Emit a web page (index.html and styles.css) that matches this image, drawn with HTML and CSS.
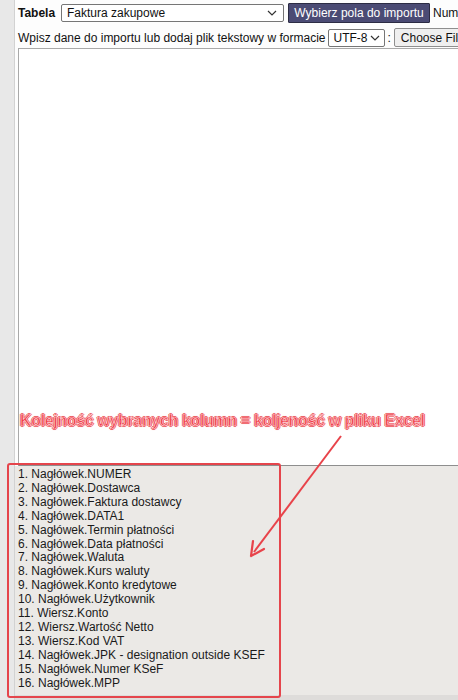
FILE: index.html
```html
<!DOCTYPE html>
<html lang="pl">
<head>
<meta charset="utf-8">
<title>Import</title>
<link rel="stylesheet" href="styles.css">
</head>
<body>
<div class="page">
  <div class="sidebar"></div>
  <div class="main">
    <div class="row row1">
      <span class="label">Tabela</span>
      <div class="select table-select"><span>Faktura zakupowe</span><svg class="chev" width="10" height="6" viewBox="0 0 10 6"><path d="M1 1 L5 5 L9 1" fill="none" stroke="#333" stroke-width="1.2"/></svg></div>
      <button class="btn-primary">Wybierz pola do importu</button>
      <span class="num">Numer</span>
    </div>
    <div class="row row2">
      <span class="hint">Wpisz dane do importu lub dodaj plik tekstowy w formacie</span>
      <div class="select enc-select"><span>UTF-8</span><svg class="chev" width="10" height="6" viewBox="0 0 10 6"><path d="M1 1 L5 5 L9 1" fill="none" stroke="#333" stroke-width="1.2"/></svg></div>
      <span class="colon">:</span>
      <button class="btn-file">Choose File</button>
    </div>
    <div class="textarea"></div>
    <div class="list">
      <div>1. Nagłówek.NUMER</div>
      <div>2. Nagłówek.Dostawca</div>
      <div>3. Nagłówek.Faktura dostawcy</div>
      <div>4. Nagłówek.DATA1</div>
      <div>5. Nagłówek.Termin płatności</div>
      <div>6. Nagłówek.Data płatności</div>
      <div>7. Nagłówek.Waluta</div>
      <div>8. Nagłówek.Kurs waluty</div>
      <div>9. Nagłówek.Konto kredytowe</div>
      <div>10. Nagłówek.Użytkownik</div>
      <div>11. Wiersz.Konto</div>
      <div>12. Wiersz.Wartość Netto</div>
      <div>13. Wiersz.Kod VAT</div>
      <div>14. Nagłówek.JPK - designation outside KSEF</div>
      <div>15. Nagłówek.Numer KSeF</div>
      <div>16. Nagłówek.MPP</div>
    </div>
  </div>
  <div class="note">Kolejność wybranych kolumn = koljeność w pliku Excel</div>
  <div class="redbox"></div>
  <svg class="arrow" width="458" height="700" viewBox="0 0 458 700">
    <line x1="341" y1="436" x2="254" y2="552" stroke="#e8434a" stroke-width="2"/>
    <path d="M251 556 L253 541 M251 556 L264 549" fill="none" stroke="#e8434a" stroke-width="2.2" stroke-linecap="round"/>
  </svg>
</div>
</body>
</html>
```
FILE: styles.css
```css
html, body {
  margin: 0;
  padding: 0;
}
body {
  font-family: "Liberation Sans", Arial, sans-serif;
  font-size: 12px;
  color: #111;
  background: #fdfdfd;
  overflow: hidden;
}
.page {
  position: relative;
  display: flex;
  width: 458px;
  height: 700px;
  overflow: hidden;
}
.sidebar {
  flex: 0 0 14px;
  background: #e8e8e8;
  border-right: 1px solid #d2d2d2;
}
.main {
  flex: 1;
  min-width: 0;
  padding-left: 3px;
  display: flex;
  flex-direction: column;
  overflow: hidden;
}
.row {
  display: flex;
  align-items: center;
  white-space: nowrap;
}
.row > * {
  flex: none;
}
.row1 {
  margin-top: 3px;
  height: 20px;
}
.label {
  font-weight: bold;
  width: 43px;
}
.select {
  box-sizing: border-box;
  display: flex;
  align-items: center;
  justify-content: space-between;
  background: #fff;
  border: 1px solid #767676;
  border-radius: 2px;
  height: 18px;
  padding: 0 6px 0 5px;
  font-size: 12px;
}
.chev {
  flex: none;
}
.table-select {
  width: 223px;
}
.btn-primary {
  box-sizing: border-box;
  margin-left: 4px;
  height: 20px;
  width: 142px;
  padding: 0;
  background: #4b4b74;
  color: #fff;
  border: 1px solid #2c2c44;
  border-radius: 1px;
  font-family: inherit;
  font-size: 12px;
}
.num {
  margin-left: 3px;
}
.row2 {
  margin-top: 5px;
  height: 19px;
}
.enc-select {
  margin-left: 3px;
  width: 57px;
  padding: 0 5px 0 4px;
}
.enc-select span {
  margin-right: 3px;
}
.colon {
  margin-left: 2px;
}
.btn-file {
  box-sizing: border-box;
  margin-left: 3px;
  height: 19px;
  padding: 0 6px;
  background: #efefef;
  border: 1px solid #8f8f8f;
  border-radius: 2px;
  font-family: inherit;
  font-size: 12px;
  color: #111;
}
.textarea {
  box-sizing: border-box;
  margin-top: 1px;
  height: 418px;
  width: 460px;
  background: #fff;
  border: 1px solid #a9a9a9;
  border-bottom-color: #8e8e8e;
  flex: none;
}
.list {
  flex: 1;
  margin-left: -3px;
  padding: 2px 0 0 3px;
  background: #ebe9e6;
  line-height: 13.9px;
  color: #1a1a1a;
  white-space: nowrap;
  border-bottom: 5px solid #dedcda;
}
.note {
  position: absolute;
  left: 20px;
  top: 412px;
  font-size: 16px;
  font-weight: bold;
  letter-spacing: -0.35px;
  color: #ef3d47;
  white-space: nowrap;
  -webkit-text-stroke: 0.7px rgba(255, 225, 228, 0.95);
  text-shadow: 1px 0 0 #e8434a, -1px 0 0 #e8434a, 0 1px 0 #e8434a, 0 -1px 0 #e8434a, 0 0 2px rgba(232, 67, 74, 0.6);
}
.redbox {
  position: absolute;
  left: 7px;
  top: 463px;
  width: 270px;
  height: 231px;
  border: 2px solid #e5454c;
  border-radius: 3px;
}
.arrow {
  position: absolute;
  left: 0;
  top: 0;
  pointer-events: none;
}
```
